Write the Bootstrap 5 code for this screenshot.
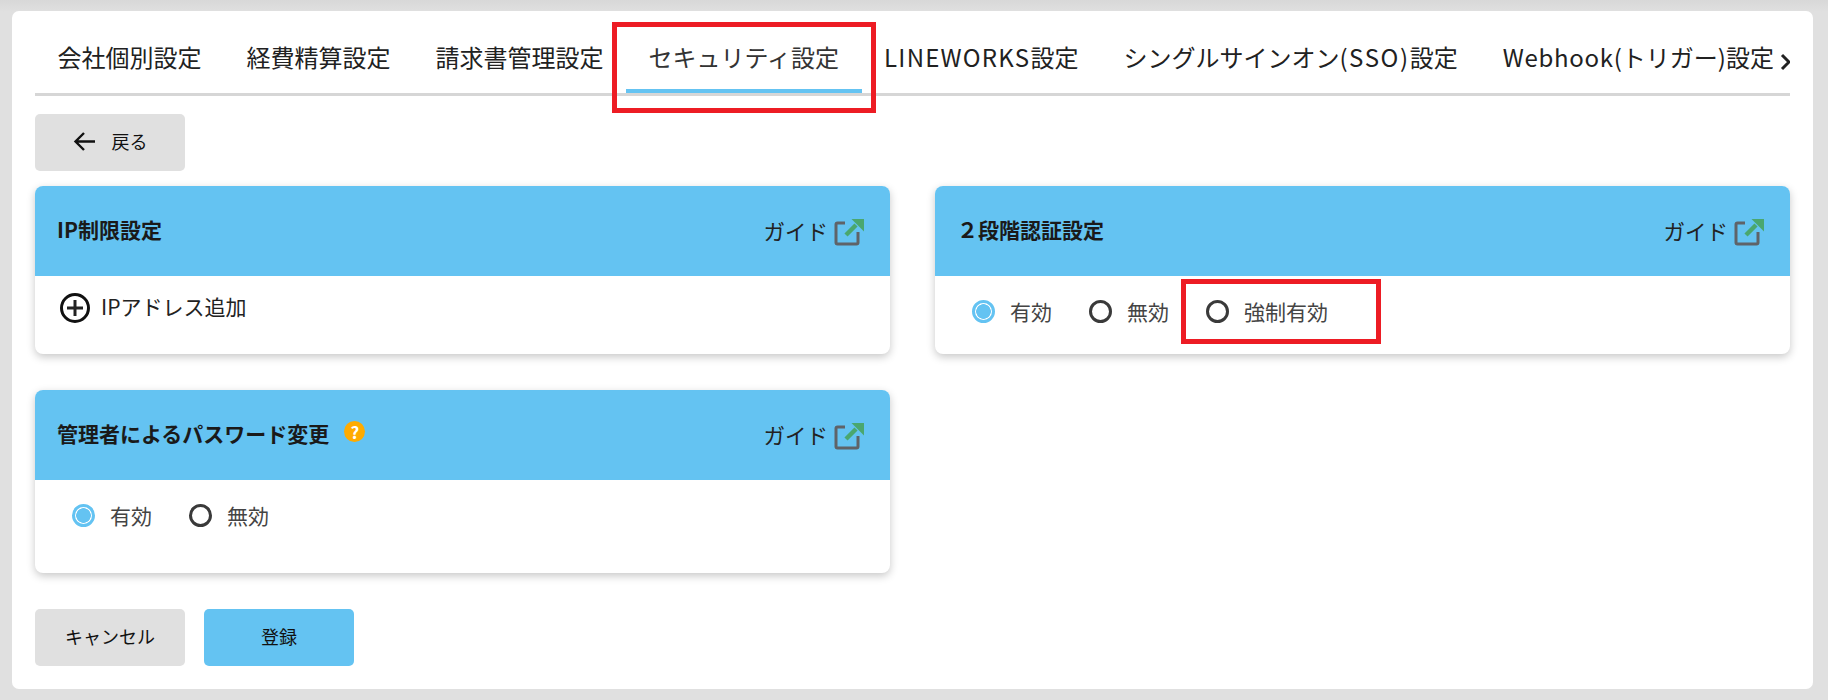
<!DOCTYPE html>
<html lang="ja">
<head>
<meta charset="utf-8">
<title>セキュリティ設定</title>
<link href="https://cdn.jsdelivr.net/npm/bootstrap@5.3.0/dist/css/bootstrap.min.css" rel="stylesheet">
<style>
html,body{height:700px;overflow:hidden}
body{background:linear-gradient(#d8d8d8,#e0e0e0 12px);font-family:"Noto Sans CJK JP","Noto Sans",sans-serif;color:#212121;padding:11px 15px 11px 12px}
.sheet{position:relative;height:678px;background:#fff;border-radius:7px;padding:0 23px}
.tabbar{height:85px;border-bottom:3px solid #d6d6d6;flex-wrap:nowrap;overflow:hidden;position:relative}
.tabbar .nav-link{color:#212121;font-size:24px;line-height:32px;padding:30px 22.500px 0;height:82px;border-bottom:4px solid transparent;white-space:nowrap;border-radius:0;flex:none}
.tabbar .nav-link.active{border-bottom-color:#64c3f2;color:#333}
.latin{letter-spacing:1.250px}
.latin-wide{letter-spacing:1.600px}
.latin-tight{letter-spacing:.700px}
.more{position:absolute;right:-7px;top:36px;width:24px;height:30px;background:#fff;display:flex;align-items:center;justify-content:center}
.btn.ghost,.btn.sky{width:150px;height:57px;border:0;border-radius:5px;font-size:18px;color:#111;padding:0 0 3px;display:inline-flex;align-items:center;justify-content:center}
.btn.ghost{background:#e0e0e0}
.btn.sky{background:#64c3f2}
.back{margin-top:18px;gap:16px}
.rows{--bs-gutter-x:45px;--bs-gutter-y:0}
.first-row{margin-top:15px}
.next-row{margin-top:36px}
.panel{border:0;border-radius:8px;box-shadow:0 3px 8px rgba(0,0,0,.22);overflow:hidden;height:168px}
.panel.tall{height:183px}
.panel .card-header{background:#64c3f2;border:0;border-radius:0;height:90px;padding:0 26px 0 22px}
.panel-title{font-size:21px;font-weight:700;color:#1a1a1a;margin:0;line-height:30px;padding-bottom:5px}
.guide{font-size:21.500px;color:#222;gap:6px;text-decoration:none;line-height:30px}
.guide svg{margin-top:2px}
.ask{display:inline-flex;width:21px;height:21px;border-radius:50%;background:#ffab00;color:#fff;align-items:center;justify-content:center;font-size:17px;font-weight:700;line-height:1;margin-left:15px;margin-top:-2px}
.add{font-size:21px;color:#222;gap:11px;padding:15px 0 0 25px}
.add span{padding-bottom:2px}
.choices{padding:20px 0 0 37px}
.choice{display:inline-flex;align-items:center;margin:0 37px 0 0;padding:0;min-height:0;font-size:21px;line-height:30px;color:#444}
.choice .form-check-input{float:none;margin:0 15px 0 0;width:23px;height:23px;border:3px solid #3a3a3a;background:#fff;flex:none}
.choice .form-check-input:checked{border-color:#64c3f2;background:radial-gradient(circle,#64c3f2 0 7px,#fff 7.600px)}
.choice .form-check-input:focus{box-shadow:none}
.redbox{position:absolute;border:5px solid #ed1c24;pointer-events:none}
.rb-tab{left:600px;top:11px;width:264px;height:91px}
.rb-radio{left:1169px;top:268px;width:200px;height:65px}
.foot{margin-top:36px;gap:19px}
</style>
</head>
<body>
<div class="sheet">
  <ul class="nav tabbar">
    <li class="nav-item"><a class="nav-link" href="#">会社個別設定</a></li>
    <li class="nav-item"><a class="nav-link" href="#">経費精算設定</a></li>
    <li class="nav-item"><a class="nav-link" href="#">請求書管理設定</a></li>
    <li class="nav-item"><a class="nav-link active" href="#">セキュリティ設定</a></li>
    <li class="nav-item"><a class="nav-link" href="#"><span class="latin">LINEWORKS</span>設定</a></li>
    <li class="nav-item"><a class="nav-link" href="#">シングルサインオン<span class="latin-wide">(SSO)</span>設定</a></li>
    <li class="nav-item"><a class="nav-link" href="#"><span class="latin-tight">Webhook</span>(トリガー)設定</a></li>
    <li class="more"><svg width="13" height="20" viewBox="0 0 13 20"><path d="M3 3l7 7-7 7" fill="none" stroke="#222" stroke-width="3"/></svg></li>
  </ul>

  <button type="button" class="btn ghost back">
    <svg width="23" height="21" viewBox="0 0 23 21"><path d="M22 10.500H3M11 2L2.500 10.500l8.500 8.500" fill="none" stroke="#111" stroke-width="2.400"/></svg>
    <span>戻る</span>
  </button>

  <div class="row rows first-row">
    <div class="col-6">
      <div class="card panel">
        <div class="card-header d-flex align-items-center justify-content-between">
          <h2 class="panel-title">IP制限設定</h2>
          <a class="guide d-flex align-items-center" href="#">ガイド
            <svg width="30" height="28" viewBox="0 0 30 28"><path d="M11 5H3.500Q2 5 2 6.500V24.500Q2 26 3.500 26H22.500Q24 26 24 24.500V14" fill="none" stroke="#5f6368" stroke-width="3"/><path d="M12 17L22 7" stroke="#4aa76f" stroke-width="4.500"/><path d="M17.500 1H30V13.500Z" fill="#4aa76f"/></svg>
          </a>
        </div>
        <div class="add d-flex align-items-center">
          <svg width="30" height="30" viewBox="0 0 30 30"><circle cx="15" cy="15" r="13.500" fill="none" stroke="#111" stroke-width="3"/><path d="M15 7v16M7 15h16" stroke="#222" stroke-width="3"/></svg>
          <span>IPアドレス追加</span>
        </div>
      </div>
    </div>
    <div class="col-6">
      <div class="card panel">
        <div class="card-header d-flex align-items-center justify-content-between">
          <h2 class="panel-title">２段階認証設定</h2>
          <a class="guide d-flex align-items-center" href="#">ガイド
            <svg width="30" height="28" viewBox="0 0 30 28"><path d="M11 5H3.500Q2 5 2 6.500V24.500Q2 26 3.500 26H22.500Q24 26 24 24.500V14" fill="none" stroke="#5f6368" stroke-width="3"/><path d="M12 17L22 7" stroke="#4aa76f" stroke-width="4.500"/><path d="M17.500 1H30V13.500Z" fill="#4aa76f"/></svg>
          </a>
        </div>
        <div class="choices">
          <label class="form-check choice"><input class="form-check-input" type="radio" name="two" checked>有効</label><label class="form-check choice"><input class="form-check-input" type="radio" name="two">無効</label><label class="form-check choice"><input class="form-check-input" type="radio" name="two">強制有効</label>
        </div>
      </div>
    </div>
  </div>

  <div class="row rows next-row">
    <div class="col-6">
      <div class="card panel tall">
        <div class="card-header d-flex align-items-center justify-content-between">
          <h2 class="panel-title d-flex align-items-center">管理者によるパスワード変更<span class="ask">?</span></h2>
          <a class="guide d-flex align-items-center" href="#">ガイド
            <svg width="30" height="28" viewBox="0 0 30 28"><path d="M11 5H3.500Q2 5 2 6.500V24.500Q2 26 3.500 26H22.500Q24 26 24 24.500V14" fill="none" stroke="#5f6368" stroke-width="3"/><path d="M12 17L22 7" stroke="#4aa76f" stroke-width="4.500"/><path d="M17.500 1H30V13.500Z" fill="#4aa76f"/></svg>
          </a>
        </div>
        <div class="choices">
          <label class="form-check choice"><input class="form-check-input" type="radio" name="pw" checked>有効</label><label class="form-check choice"><input class="form-check-input" type="radio" name="pw">無効</label>
        </div>
      </div>
    </div>
  </div>

  <div class="d-flex foot">
    <button type="button" class="btn ghost">キャンセル</button>
    <button type="button" class="btn sky">登録</button>
  </div>

  <div class="redbox rb-tab"></div>
  <div class="redbox rb-radio"></div>
</div>
<script src="https://cdn.jsdelivr.net/npm/bootstrap@5.3.0/dist/js/bootstrap.bundle.min.js"></script>
</body>
</html>
